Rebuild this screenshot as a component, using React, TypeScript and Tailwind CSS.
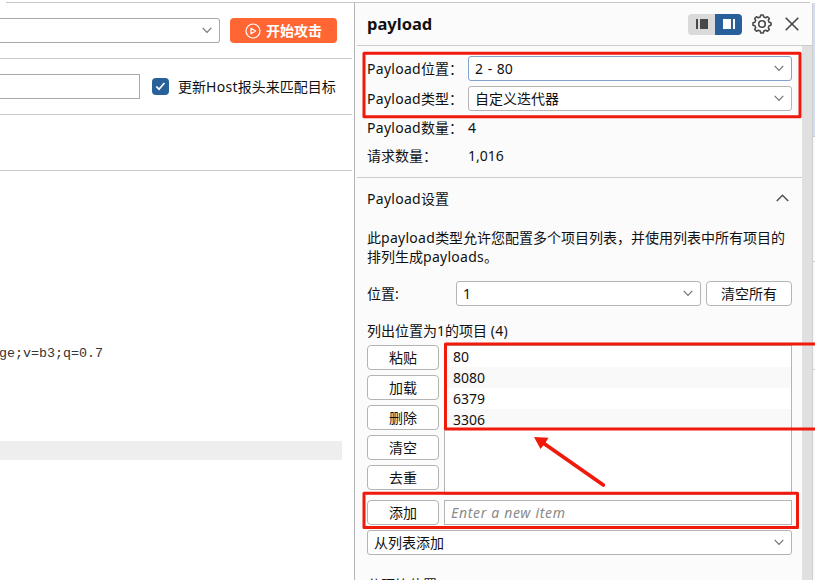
import React from "react";

const Down = () => (
  <svg className="shrink-0" width="10" height="7" viewBox="0 0 10 7" fill="none" stroke="#707478" strokeWidth="1.15">
    <path d="M0.7 0.8 5 5.4 9.3 0.8" />
  </svg>
);

const Latin = ({ children }: { children: string }) => <span className="tracking-[0.28px]">{children}</span>;

function Combo({ children, className = "" }: { children?: React.ReactNode; className?: string }) {
  return (
    <div className={`flex h-[25px] items-center justify-between rounded-[3px] border bg-white pl-1.5 pr-[7px] ${className}`}>
      <span>{children}</span>
      <Down />
    </div>
  );
}

function Button({ children, className = "w-[72px]" }: { children: React.ReactNode; className?: string }) {
  return (
    <button className={`flex h-[25px] shrink-0 items-center justify-center rounded-[4px] border border-[#b4b4b4] bg-white ${className}`}>
      {children}
    </button>
  );
}

function RequestPane() {
  return (
    <section className="flex w-[354px] shrink-0 flex-col overflow-hidden bg-white pr-[2px]">
      <div className="flex h-[56px] shrink-0 items-start border-b border-[#cccccc] pt-[15px]">
        <Combo className="w-[220px] rounded-l-none border-l-0 border-[#a9a9a9]" />
        <button className="ml-2.5 flex h-[25px] w-[107px] items-center justify-center gap-[5px] rounded-[4px] bg-[#ff6633] font-bold text-white">
          <svg width="16" height="16" viewBox="0 0 16 16" fill="none" stroke="#fff" strokeWidth="1.2">
            <circle cx="8" cy="8" r="7" />
            <path d="M6 5.2v5.6L10.6 8Z" strokeLinejoin="round" />
          </svg>
          <span>开始攻击</span>
        </button>
      </div>
      <div className="flex h-[56px] shrink-0 items-start border-b border-[#cccccc] pt-[15px]">
        <div className="h-[25px] w-[140px] shrink-0 border border-l-0 border-[#a9a9a9]" />
        <div className="ml-3 mt-1 flex size-[17px] shrink-0 items-center justify-center rounded-[4px] bg-[#28609a]">
          <svg width="11" height="9" viewBox="0 0 11 9" fill="none" stroke="#fff" strokeWidth="1.7">
            <path d="M1.3 4.5 4 7.2 9.4 1" />
          </svg>
        </div>
        <span className="ml-[9px] mt-[3px] whitespace-nowrap">
          更新<Latin>Host</Latin>报头来匹配目标
        </span>
      </div>
      <div className="h-[56px] shrink-0 border-b border-[#cccccc]" />
      <pre className="mt-[173px] h-5 shrink-0 whitespace-pre font-['Liberation_Mono',monospace] text-[13.33px] leading-5 text-[#333]">
        <span className="-ml-px">ge;v=b3;q=0.7</span>
      </pre>
      <div className="mt-[77px] h-[19px] w-[342px] shrink-0 bg-[#eeeeee]" />
    </section>
  );
}

function Header() {
  return (
    <header className="flex h-[43px] shrink-0 items-center border-b border-[#cccccc] pl-[10px] pr-[13px]">
      <h1 className="flex-1 text-[16.5px] font-bold leading-5">payload</h1>
      <div className="flex h-[21px] w-[54px] overflow-hidden rounded-[4px]">
        <div className="flex w-[27px] items-center justify-center bg-[#dadada] pb-px">
          <svg width="12" height="10" viewBox="0 0 12 10" fill="#484848">
            <path d="M0 0h2v10H0zM4 0h8v10H4z" />
          </svg>
        </div>
        <div className="flex w-[27px] items-center justify-center bg-[#28609a] pb-px">
          <svg width="12" height="10" viewBox="0 0 12 10" fill="#fff">
            <path d="M0 0h8v10H0zM10 0h2v10h-2z" />
          </svg>
        </div>
      </div>
      <svg className="ml-[10px]" width="20" height="20" viewBox="0 0 20 20" fill="none" stroke="#4b4b4b" strokeWidth="1.6" strokeLinejoin="round">
        <path d="M8.2 2.9 8.8 1h2.4l.6 1.9 1.9.8 1.8-1 1.8 1.8-1 1.8.8 1.9 1.9.6v2.4l-1.9.6-.8 1.9 1 1.8-1.8 1.8-1.8-1-1.9.8-.6 1.9H8.8l-.6-1.9-1.9-.8-1.8 1-1.8-1.8 1-1.8-.8-1.9L1 11.2V8.8l1.9-.6.8-1.9-1-1.8 1.8-1.8 1.8 1Z" />
        <circle cx="10" cy="10" r="3.3" />
      </svg>
      <svg className="ml-[13px]" width="14" height="14" viewBox="0 0 14 14" stroke="#444" strokeWidth="1.6">
        <path d="M.7.7l12.6 12.6M13.3.7.7 13.3" />
      </svg>
    </header>
  );
}

function Position() {
  return (
    <div className="flex h-[132px] shrink-0 flex-col border-b border-[#cccccc] pl-[10px] pr-[10px] pt-[10px]">
      <div className="flex h-[25px] items-center">
        <span className="w-[101px] whitespace-nowrap">
          <Latin>Payload</Latin>位置：
        </span>
        <Combo className="flex-1 border-[#7fa3cf] [word-spacing:1px]">2 - 80</Combo>
      </div>
      <div className="mt-[5px] flex h-[25px] items-center">
        <span className="w-[101px] whitespace-nowrap">
          <Latin>Payload</Latin>类型：
        </span>
        <Combo className="flex-1 border-[#b4b4b4]">自定义迭代器</Combo>
      </div>
      <div className="mt-[7px] flex h-5">
        <span className="w-[101px] whitespace-nowrap">
          <Latin>Payload</Latin>数量：
        </span>
        <span>4</span>
      </div>
      <div className="mt-2 flex h-5">
        <span className="w-[101px]">请求数量：</span>
        <span>1,016</span>
      </div>
    </div>
  );
}

const actions = ["粘贴", "加载", "删除", "清空", "去重"];
const items = ["80", "8080", "6379", "3306"];

function Settings() {
  return (
    <div className="flex flex-1 flex-col overflow-hidden px-[10px] pt-[11px]">
      <div className="flex h-5 shrink-0 items-center justify-between">
        <h2>
          <Latin>Payload</Latin>设置
        </h2>
        <svg className="mb-0.5 mr-[3px]" width="13" height="8" viewBox="0 0 13 8" fill="none" stroke="#505050" strokeWidth="1.5">
          <path d="M.8 7 6.5 1.3 12.2 7" />
        </svg>
      </div>
      <p className="mt-[19px] h-[38px] shrink-0 whitespace-nowrap leading-[19px]">
        此<Latin>payload</Latin>类型允许您配置多个项目列表，并使用列表中所有项目的
        <br />
        排列生成<Latin>payloads</Latin>。
      </p>
      <div className="mt-[15px] flex h-[25px] shrink-0 items-center">
        <span className="w-[89px]">位置:</span>
        <Combo className="w-[245px] border-[#b4b4b4]">1</Combo>
        <Button className="ml-[5px] w-[86px]">清空所有</Button>
      </div>
      <div className="mt-[15px] h-5 shrink-0">
        列出位置为1的项目 <Latin>(4)</Latin>
      </div>
      <div className="mt-1 flex h-[155px] shrink-0">
        <div className="flex w-[77px] flex-col gap-[5px]">
          {actions.map((a) => (
            <Button key={a}>{a}</Button>
          ))}
        </div>
        <div className="h-[150px] flex-1 border border-[#b4b4b4] bg-white">
          {items.map((v) => (
            <div key={v} className="h-[21px] pl-2 leading-[21px] even:bg-[#f9f9f9]">
              {v}
            </div>
          ))}
        </div>
      </div>
      <div className="flex h-[25px] shrink-0">
        <Button>添加</Button>
        <div className="ml-[5px] flex flex-1 items-center border border-[#b4b4b4] bg-white pl-1.5 italic tracking-[0.68px] text-[#8a8a8a]">
          Enter a new item
        </div>
      </div>
      <Combo className="mt-[5px] shrink-0 border-[#b4b4b4]">从列表添加</Combo>
      <div className="mt-5 shrink-0">分隔符位置1</div>
    </div>
  );
}

function Annotations() {
  return (
    <svg className="pointer-events-none absolute inset-0" width="815" height="580" viewBox="0 0 815 580" fill="none" stroke="#f01a0c" strokeWidth="3" strokeLinejoin="round">
      <rect x="364" y="53.2" width="436" height="63.5" />
      <path d="M818 344H445.5V429H818" />
      <rect x="364" y="493.3" width="433.5" height="34.3" />
      <path d="M544 443.5 603.3 485" strokeWidth="3.8" strokeLinecap="round" />
      <path d="M534 437l14.5.8-3.5 5.7-4.5 5.5Z" fill="#f01a0c" stroke="none" />
    </svg>
  );
}

export default function App() {
  return (
    <div className="relative flex h-[580px] w-[815px] flex-col overflow-hidden bg-white font-['Noto_Sans','Noto_Sans_CJK_SC',sans-serif] text-[14px] leading-5 text-[#111]">
      <div className="ml-1.5 h-[3px] w-[804px] shrink-0 border-b border-[#c8c8c8]" />
      <div className="flex min-h-0 flex-1">
        <RequestPane />
        <section className="flex w-[458px] shrink-0 flex-col border-l border-[#b4b4b4] bg-[#fbfbfb] pl-[2px]">
          <Header />
          <div className="flex min-h-0 flex-1">
            <div className="flex w-[445px] shrink-0 flex-col">
              <Position />
              <Settings />
            </div>
            <div className="flex-1 bg-[#e0e0e0]" />
          </div>
        </section>
        <div className="flex flex-1 flex-col border-l border-[#cfcfcf] bg-[#f9f9f9]">
          <div className="h-[134px] shrink-0 border-b border-[#c8c8c8] bg-[#d5def0]" />
          <div className="h-[125px] shrink-0 border-b border-[#cfcfcf]" />
          <div className="h-[108px] shrink-0 border-b border-[#cfcfcf]" />
        </div>
      </div>
      <Annotations />
    </div>
  );
}
